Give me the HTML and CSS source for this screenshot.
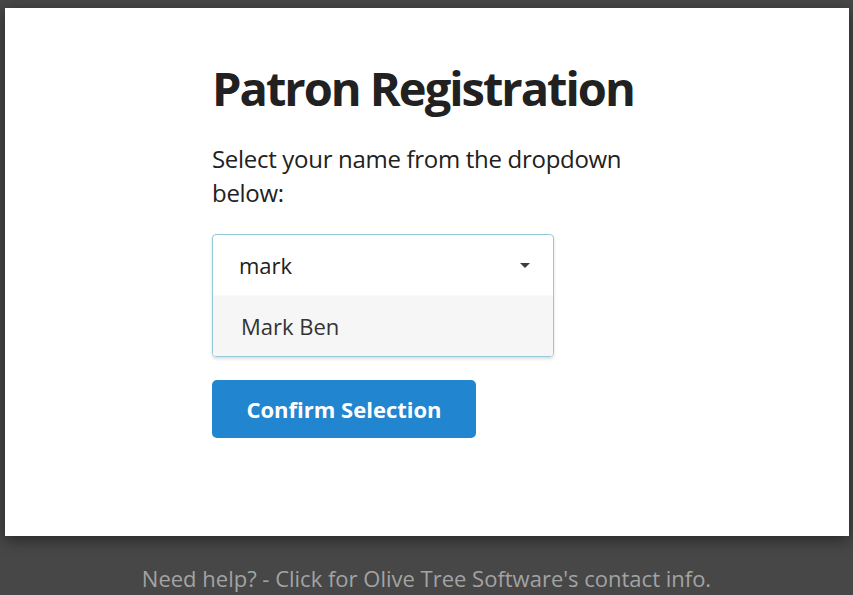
FILE: index.html
```html
<!DOCTYPE html>
<html lang="en">
<head>
    <meta charset="UTF-8">
    <meta name="viewport" content="width=device-width, initial-scale=1.0">
    <title>Patron Registration</title>
    <link rel="stylesheet" href="styles.css">
</head>
<body>
    <div class="card">
        <div class="content">
            <h1>Patron Registration</h1>
            <p class="lead">Select your name from the dropdown below:</p>
            <div class="dropdown">
                <div class="search">
                    <span class="query">mark</span>
                    <svg class="caret" width="10" height="5" viewBox="0 0 10 5"><path d="M0 0H10L5 5Z" fill="#3d3d3d"/></svg>
                </div>
                <div class="menu">
                    <div class="item">Mark Ben</div>
                </div>
            </div>
            <button class="confirm">Confirm Selection</button>
        </div>
    </div>
    <div class="footer">Need help? - Click for Olive Tree Software's contact info.</div>
</body>
</html>
```

FILE: styles.css
```css
body {
    margin: 0;
    background-color: #474747;
    font-family: "Open Sans", "Noto Sans", sans-serif;
    color: #212121;
}
.card {
    margin: 8px 4px 0 5px;
    height: 528px;
    background-color: #fff;
    box-shadow: 0 4px 14px rgba(0,0,0,0.45);
}
.content {
    width: 430px;
    margin: 0 auto;
    padding-top: 52px;
}
h1 {
    margin: 0 0 26px;
    font-size: 47px;
    line-height: 56px;
    font-weight: 700;
    letter-spacing: -2px;
    white-space: nowrap;
}
.lead {
    margin: 0 0 24px;
    font-size: 24px;
    line-height: 34px;
    letter-spacing: -0.3px;
}
.dropdown {
    width: 342px;
    box-sizing: border-box;
    border: 1px solid #96c8da;
    border-radius: 4px;
    box-shadow: 0 2px 3px rgba(34,36,38,0.15);
    overflow: hidden;
}
.search {
    display: flex;
    align-items: center;
    justify-content: space-between;
    height: 60px;
    padding: 0 23px 0 26px;
    font-size: 22px;
}
.caret {
    display: block;
}
.menu {
    border-top: 1px solid #fafafa;
}
.item {
    height: 60px;
    display: flex;
    align-items: center;
    padding-left: 28px;
    background-color: #f6f6f6;
    font-size: 22px;
    color: #333;
}
.confirm {
    margin-top: 23px;
    width: 264px;
    height: 58px;
    background-color: #2185d0;
    color: #fff;
    border: none;
    border-radius: 5px;
    font-family: inherit;
    font-size: 22px;
    font-weight: 700;
    cursor: pointer;
}
.footer {
    padding-top: 27px;
    text-align: center;
    font-size: 22px;
    color: #a3a3a3;
}
```
